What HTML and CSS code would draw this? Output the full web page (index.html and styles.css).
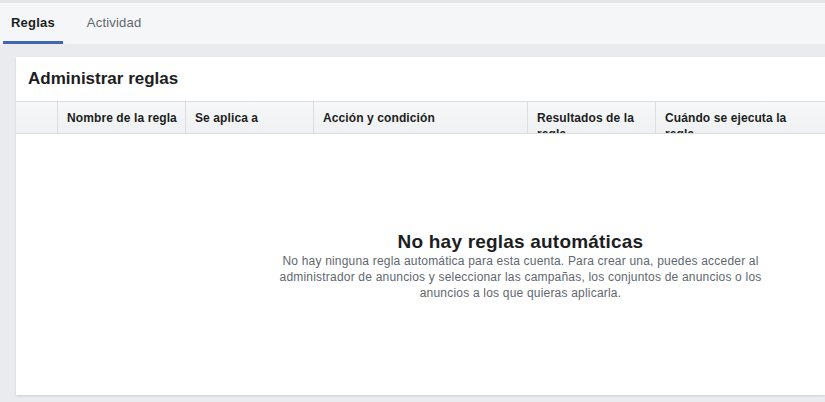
FILE: index.html
```html
<!DOCTYPE html>
<html lang="es">
<head>
    <meta charset="UTF-8">
    <meta name="viewport" content="width=device-width, initial-scale=1.0">
    <title>Reglas automatizadas</title>
    <link rel="stylesheet" href="styles.css">
</head>
<body>

    <!-- Pestañas -->
    <div class="tabs">
        <div class="tab tab-active">Reglas</div>
        <div class="tab">Actividad</div>
    </div>

    <div class="card">
        <h2 class="card-title">Administrar reglas</h2>

        <div class="rules-head">
            <div class="head-cell"></div>
            <div class="head-cell">Nombre de la regla</div>
            <div class="head-cell">Se aplica a</div>
            <div class="head-cell">Acción y condición</div>
            <div class="head-cell">Resultados de la regla</div>
            <div class="head-cell head-cell-last">Cuándo se ejecuta la regla</div>
        </div>

        <div class="empty-state">
            <div class="empty-title">No hay reglas automáticas</div>
            <p class="empty-text">No hay ninguna regla automática para esta cuenta. Para crear una, puedes acceder al administrador de anuncios y seleccionar las campañas, los conjuntos de anuncios o los anuncios a los que quieras aplicarla.</p>
        </div>
    </div>

</body>
</html>
```

FILE: styles.css
```css
body {
    font-family: "Liberation Sans", Arial, sans-serif;
    margin: 0;
    background-color: #e9ebee;
    color: #1c1e21;
    height: 402px;
    overflow: hidden;
}

/* Barra de pestañas */
.tabs {
    display: flex;
    height: 41px;
    border-top: 3px solid #e3e5e8;
    background-color: #f5f6f7;
    padding-left: 3px;
}

.tab {
    padding: 0 8px;
    margin-right: 8px;
    line-height: 40px;
    height: 38px;
    font-size: 13px;
    letter-spacing: 0.2px;
    color: #606770;
    border-bottom: 3px solid transparent;
}

.tab-active {
    font-weight: bold;
    color: #1c1e21;
    border-bottom-color: #4267b2;
    margin-right: 16px;
}

/* Tarjeta principal */
.card {
    margin: 13px 0 0 16px;
    height: 338px;
    background-color: #fff;
    box-shadow: 0 1px 2px rgba(0, 0, 0, 0.12);
    overflow: hidden;
}

.card-title {
    margin: 0;
    padding: 0 12px;
    height: 44px;
    line-height: 44px;
    font-size: 17px;
    font-weight: bold;
}

.rules-head {
    display: grid;
    grid-template-columns: 41px 128px 128px 214px 128px 1fr;
    height: 31px;
    border-top: 1px solid #dadde1;
    border-bottom: 1px solid #dadde1;
    background: linear-gradient(#f7f8fa, #eef0f2);
}

.head-cell {
    padding: 8px 3px 0 9px;
    font-size: 12px;
    font-weight: bold;
    letter-spacing: 0.1px;
    line-height: 16px;
    overflow: hidden;
    border-left: 1px solid #dadde1;
}

.head-cell:first-child {
    border-left: none;
}

.head-cell-last {
    padding-right: 30px;
}

/* Estado vacío */
.empty-state {
    padding: 97px 0 0 200px;
    text-align: center;
}

.empty-title {
    font-size: 19px;
    font-weight: bold;
    letter-spacing: 0.2px;
    line-height: 22px;
}

.empty-text {
    margin: 0 auto;
    max-width: 500px;
    font-size: 12px;
    letter-spacing: 0.2px;
    line-height: 16px;
    color: #606770;
}
```
